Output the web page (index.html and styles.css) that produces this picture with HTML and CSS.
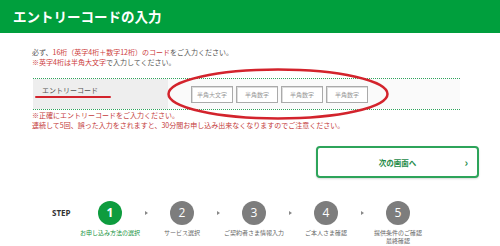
FILE: index.html
```html
<!DOCTYPE html>
<html lang="ja">
<head>
  <meta charset="UTF-8" />
  <meta name="viewport" content="width=device-width, initial-scale=1.0"/>
  <title>エントリーコードの入力</title>
  <link rel="stylesheet" href="styles.css">
</head>
<body>
  <header class="page-head">
    <h1>エントリーコードの入力</h1>
  </header>

  <main class="content">
    <div class="intro">
      <p>必ず、<span class="red">16桁（英字4桁＋数字12桁）のコード</span>をご入力ください。</p>
      <p><span class="red">※英字4桁は半角大文字</span>で入力してください。</p>
    </div>

    <div class="code-row">
      <div class="code-label"><span>エントリーコード</span></div>
      <div class="code-inputs">
        <input class="code-box" type="text" placeholder="半角大文字">
        <input class="code-box" type="text" placeholder="半角数字">
        <input class="code-box" type="text" placeholder="半角数字">
        <input class="code-box" type="text" placeholder="半角数字">
      </div>
      <!-- red pen marks -->
      <span class="mark-line"></span>
      <svg class="mark-ellipse" width="224" height="54" viewBox="0 0 224 54">
        <ellipse cx="112" cy="27" rx="109.5" ry="24.5" fill="none" stroke="#d3232c" stroke-width="2.5"/>
      </svg>
    </div>

    <div class="notes">
      <p>※正確にエントリーコードをご入力ください。</p>
      <p>連続して5回、誤った入力をされますと、30分間お申し込み出来なくなりますのでご注意ください。</p>
    </div>

    <div class="actions">
      <button class="next-btn" type="button">
        <span>次の画面へ</span>
        <span class="chev">›</span>
      </button>
    </div>

    <div class="steps">
      <span class="steps-title">STEP</span>
      <div class="step active"><span class="num">1</span><span class="cap">お申し込み方法の選択</span></div>
      <span class="arrow"></span>
      <div class="step"><span class="num">2</span><span class="cap">サービス選択</span></div>
      <span class="arrow"></span>
      <div class="step"><span class="num">3</span><span class="cap">ご契約者さま情報入力</span></div>
      <span class="arrow"></span>
      <div class="step"><span class="num">4</span><span class="cap">ご本人さま確認</span></div>
      <span class="arrow"></span>
      <div class="step"><span class="num">5</span><span class="cap">提供条件のご確認<br>最終確認</span></div>
    </div>
  </main>
</body>
</html>
```

FILE: styles.css
```css
body {
  margin: 0;
  background: white;
  font-family: "Noto Sans CJK JP", "Noto Sans", sans-serif;
  color: #555;
}

p {
  margin: 0;
}

.page-head {
  background: #009f3d;
  height: 33px;
  padding-left: 13px;
}

.page-head h1 {
  margin: 0;
  font-size: 13.5px;
  line-height: 33px;
  font-weight: bold;
  color: white;
}

.content {
  padding: 0 21px 0 32px;
}

.intro {
  margin-top: 14px;
  font-size: 7px;
  line-height: 10px;
}

.red {
  color: #cc3b3b;
}

.code-row {
  position: relative;
  display: flex;
  height: 30px;
  margin: 11px 19px 0 1px;
  border-top: 1px dotted #2fa35c;
  border-bottom: 1px dotted #2fa35c;
}

.code-label {
  width: 135px;
  background: #eeeeee;
  font-size: 7px;
  line-height: 10px;
  padding: 6px 0 0 9px;
  box-sizing: border-box;
}

.code-inputs {
  flex: 1;
  display: flex;
  align-items: center;
  gap: 3px;
  padding-left: 23px;
  background: #fafafa;
}

.code-box {
  width: 42px;
  height: 17px;
  box-sizing: border-box;
  border: 1px solid #aaa;
  box-shadow: inset 1px 1px 0 #ddd;
  background: white;
  padding: 0;
  font-family: inherit;
  font-size: 6px;
  text-align: center;
}

.code-box::placeholder {
  color: #999;
}

.mark-line {
  position: absolute;
  left: 2px;
  top: 17px;
  width: 76px;
  height: 2px;
  border-radius: 1px;
  background: #d3232c;
}

.mark-ellipse {
  position: absolute;
  left: 133px;
  top: -12px;
}

.notes {
  font-size: 7px;
  line-height: 10px;
  color: #c43a3a;
}

.actions {
  display: flex;
  justify-content: flex-end;
  margin-top: 16px;
}

.next-btn {
  width: 163px;
  height: 32px;
  display: flex;
  align-items: center;
  justify-content: center;
  position: relative;
  background: white;
  border: 2px solid #2da45a;
  border-radius: 4px;
  box-shadow: 0 1px 2px rgba(0,0,0,0.15);
  font-family: inherit;
  font-size: 7.5px;
  font-weight: bold;
  color: #238a47;
  padding: 0;
}

.next-btn .chev {
  position: absolute;
  right: 9px;
  font-size: 11px;
  font-weight: bold;
  line-height: 11px;
  top: 9px;
}

.steps {
  display: flex;
  align-items: flex-start;
  margin-top: 23px;
  padding-left: 20px;
}

.steps-title {
  width: 20px;
  margin-right: 13px;
  font-family: "Open Sans", sans-serif;
  font-size: 8px;
  font-weight: bold;
  line-height: 24px;
  color: #333;
}

.step {
  width: 50px;
  display: flex;
  flex-direction: column;
  align-items: center;
}

.step .num {
  width: 24px;
  height: 24px;
  border-radius: 50%;
  background: #7d7d7d;
  color: white;
  font-family: "Open Sans", sans-serif;
  font-size: 12px;
  line-height: 24px;
  text-align: center;
}

.step.active .num {
  background: #0e9c3e;
  font-weight: bold;
}

.step .cap {
  margin-top: 4px;
  font-size: 6px;
  line-height: 8px;
  white-space: nowrap;
  text-align: center;
  color: #666;
}

.step.active .cap {
  color: #14923c;
}

.arrow {
  width: 22px;
  height: 24px;
  display: flex;
  align-items: center;
  justify-content: center;
}

.arrow::before {
  content: "";
  border-left: 3px solid #888;
  border-top: 2px solid transparent;
  border-bottom: 2px solid transparent;
}
```
